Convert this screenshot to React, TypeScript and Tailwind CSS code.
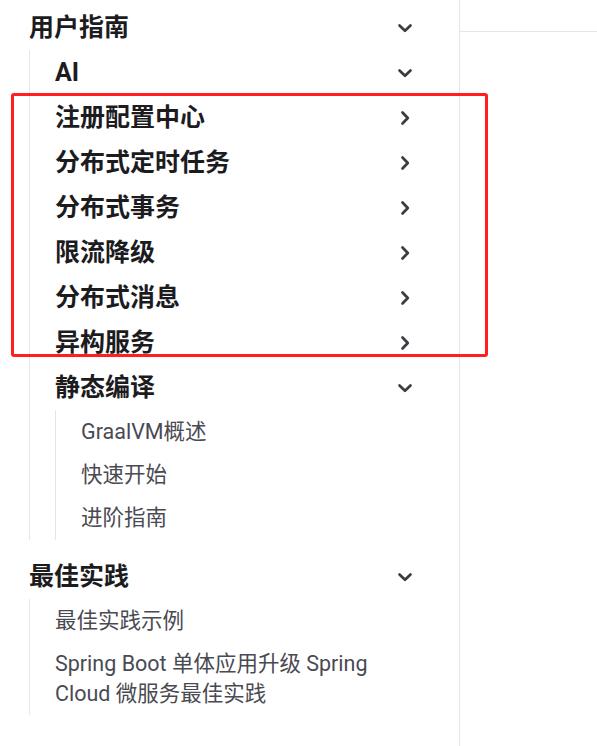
import React from "react";

const font = "font-['Roboto','Noto_Sans_CJK_SC',sans-serif]";

const Chevron = ({ down }: { down?: boolean }) => (
  <svg
    width="24"
    height="24"
    viewBox="0 0 24 24"
    className={down ? "" : "-rotate-90"}
    fill="none"
    stroke="#3c3c43"
    strokeWidth="2.7"
    strokeLinecap="round"
    strokeLinejoin="round"
  >
    <path d="M6.5 9.5 12 14.8l5.5-5.3" />
  </svg>
);

const Heading = ({ text, down }: { text: string; down?: boolean }) => (
  <div className="flex h-[45px] items-center justify-between pr-[42px]">
    <span className="text-[25px] font-bold text-[#1c1c1f]">{text}</span>
    <Chevron down={down} />
  </div>
);

const Link = ({ children }: { children: React.ReactNode }) => (
  <div className="py-[6.5px] pr-[40px] text-[21.5px] leading-[30px] text-[#4a4a52]">
    {children}
  </div>
);

const collapsed = ["注册配置中心", "分布式定时任务", "分布式事务", "限流降级", "分布式消息", "异构服务"];

export default function App() {
  return (
    <div className={`relative flex h-[746px] w-[597px] overflow-hidden bg-white ${font}`}>
      {/* sidebar */}
      <div className="w-[460px] shrink-0 border-r border-[#e6e6ea] pt-[5px] pl-[29px]">
        <Heading text="用户指南" down />
        <div className="border-l border-[#e6e6ea] pl-[25px]">
          <Heading text="AI" down />
          {collapsed.map((t) => (
            <Heading key={t} text={t} />
          ))}
          <Heading text="静态编译" down />
          <div className="border-l border-[#e6e6ea] pl-[25px] pb-[1px]">
            <Link>GraalVM概述</Link>
            <Link>快速开始</Link>
            <Link>进阶指南</Link>
          </div>
        </div>

        <div className="mt-[14px]">
          <Heading text="最佳实践" down />
          <div className="border-l border-[#e6e6ea] pl-[25px]">
            <Link>最佳实践示例</Link>
            <Link>Spring Boot 单体应用升级 Spring Cloud 微服务最佳实践</Link>
          </div>
        </div>
      </div>

      {/* content top bar */}
      <div className="flex-1">
        <div className="h-[32px] border-b border-[#e6e6ea]" />
      </div>

      {/* annotation */}
      <div className="pointer-events-none absolute left-[11px] top-[93px] h-[264px] w-[477px] rounded-[3px] border-[3px] border-[#ff1f1f]" />
    </div>
  );
}
